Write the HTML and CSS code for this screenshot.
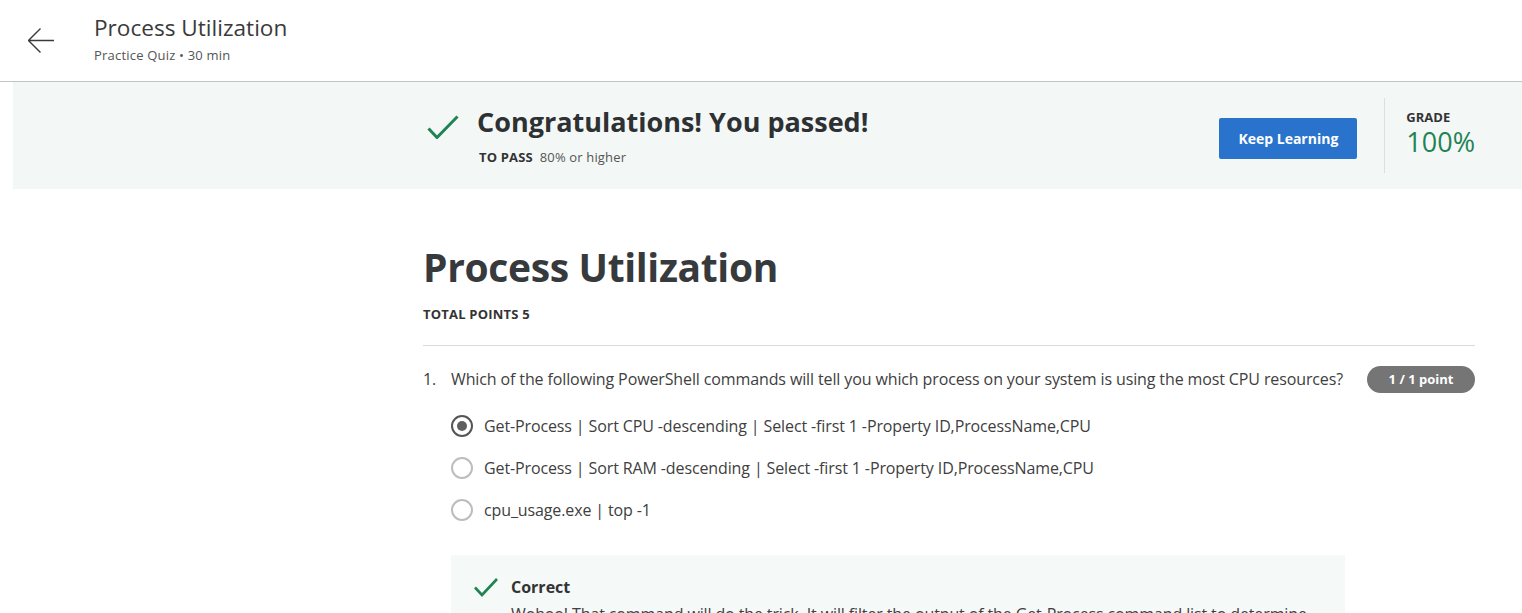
FILE: index.html
```html
<!DOCTYPE html>
<html lang="en">
<head>
<meta charset="utf-8">
<title>Process Utilization</title>
<link rel="stylesheet" href="styles.css">
</head>
<body>
<header class="topbar">
  <svg class="back" width="26" height="26" viewBox="0 0 26 26" aria-hidden="true">
    <path d="M0.5 12.5 H26 M12.5 0.5 L0.5 12.5 L12.5 24.5" fill="none" stroke="#3a3a3a" stroke-width="1.4"/>
  </svg>
  <div class="titles">
    <div class="page-title">Process Utilization</div>
    <div class="page-sub">Practice Quiz • 30 min</div>
  </div>
</header>

<section class="banner">
  <div class="banner-row">
    <svg class="pass-check" width="32" height="24" viewBox="0 0 32 24" aria-hidden="true">
      <path d="M1.5 13.5 L10 22.5 L30.5 1.5" fill="none" stroke="#1f8354" stroke-width="3"/>
    </svg>
    <div class="pass-text">
      <div class="congrats">Congratulations! You passed!</div>
      <div class="to-pass"><b>TO PASS</b>80% or higher</div>
    </div>
    <div class="banner-right">
      <button class="keep">Keep Learning</button>
      <div class="vdiv"></div>
      <div class="grade">
        <div class="grade-label">GRADE</div>
        <div class="grade-value">100%</div>
      </div>
    </div>
  </div>
</section>

<main class="quiz">
  <h1 class="quiz-title">Process Utilization</h1>
  <div class="total">TOTAL POINTS 5</div>
  <div class="rule"></div>

  <div class="question">
    <span class="qnum">1.</span>
    <span class="qtext">Which of the following PowerShell commands will tell you which process on your system is using the most CPU resources?</span>
    <span class="badge">1 / 1 point</span>
  </div>

  <div class="options">
    <div class="option"><span class="radio checked"></span><span>Get-Process | Sort CPU -descending | Select -first 1 -Property ID,ProcessName,CPU</span></div>
    <div class="option"><span class="radio"></span><span>Get-Process | Sort RAM -descending | Select -first 1 -Property ID,ProcessName,CPU</span></div>
    <div class="option"><span class="radio"></span><span>cpu_usage.exe | top -1</span></div>
  </div>

  <div class="feedback">
    <div class="fb-head">
      <svg class="fb-check" width="24" height="20" viewBox="0 0 24 20" aria-hidden="true">
        <path d="M1 10.5 L8 18 L23 2" fill="none" stroke="#1f8354" stroke-width="2.6"/>
      </svg>
      <span class="fb-title">Correct</span>
    </div>
    <p class="fb-text">Wohoo! That command will do the trick. It will filter the output of the Get-Process command list to determine which process is using the most CPU.</p>
  </div>
</main>
</body>
</html>
```
FILE: styles.css
```css
* { box-sizing: border-box; }
html, body { margin: 0; padding: 0; background: #fff; }
body {
  font-family: "Open Sans", "Noto Sans", sans-serif;
  color: #373a3c;
}

.topbar {
  display: flex;
  align-items: flex-start;
  height: 82px;
  border-bottom: 1px solid #c4c4c4;
}
.back { margin: 28px 0 0 28px; flex: none; }
.titles { margin-left: 40px; padding-top: 12px; }
.page-title { font-size: 22.6px; line-height: 32px; color: #3a3a3a; }
.page-sub { margin-top: 2px; font-size: 13px; line-height: 18px; letter-spacing: 0.2px; color: #555; }

.banner {
  margin-left: 13px;
  height: 107px;
  background: #f3f8f7;
  padding-top: 16px;
}
.banner-row {
  width: 1052px;
  margin-left: 410px;
  display: flex;
  align-items: flex-start;
}
.pass-check { margin: 17px 0 0 4px; flex: none; }
.pass-text { margin: 6px 0 0 18px; }
.congrats { font-size: 27px; line-height: 36px; font-weight: 700; color: #2e3133; }
.to-pass { margin-top: 8px; padding-left: 2px; font-size: 13px; line-height: 18px; letter-spacing: 0.15px; color: #555; }
.to-pass b { color: #333; font-weight: 700; margin-right: 7px; }

.banner-right { margin-left: auto; display: flex; align-items: flex-start; }
.keep {
  margin-top: 20px;
  width: 138px;
  height: 41px;
  border: 0;
  border-radius: 2px;
  background: #2a73cc;
  color: #fff;
  font-family: "Open Sans", sans-serif;
  font-size: 14px;
  font-weight: 700;
  padding: 0;
}
.vdiv { width: 1px; height: 75px; margin-left: 27px; background: #dedede; }
.grade { margin: 10px 0 0 21px; }
.grade-label { font-size: 13px; line-height: 18px; font-weight: 700; color: #333; }
.grade-value { font-size: 27px; line-height: 32px; color: #1f8354; }

.quiz { width: 1052px; margin-left: 423px; padding-top: 54px; }
.quiz-title { margin: 0; font-size: 39px; line-height: 48px; letter-spacing: -0.35px; font-weight: 700; color: #373a3c; }
.total { margin-top: 14px; font-size: 13px; line-height: 18px; letter-spacing: 0.2px; font-weight: 700; color: #333; }
.rule { margin-top: 22px; border-top: 1px solid #dadada; }

.question {
  margin-top: 21px;
  display: flex;
  align-items: flex-start;
  height: 24px;
  font-size: 16px;
  line-height: 24px;
  letter-spacing: -0.12px;
  color: #404040;
}
.qnum { width: 28px; flex: none; }
.qtext { flex: 1; }
.badge {
  margin-top: -1px;
  height: 27px;
  width: 108px;
  border-radius: 14px;
  background: #757575;
  color: #fff;
  font-size: 13px;
  font-weight: 700;
  line-height: 27px;
  letter-spacing: 0;
  text-align: center;
  flex: none;
}

.options { margin-top: 14px; padding-left: 28px; }
.option {
  height: 42px;
  display: flex;
  align-items: center;
  font-size: 16px;
  line-height: 24px;
  letter-spacing: -0.12px;
  color: #404040;
}
.radio {
  width: 22px;
  height: 22px;
  border-radius: 50%;
  border: 2px solid #bdbdbd;
  margin-right: 11px;
  flex: none;
  display: flex;
  align-items: center;
  justify-content: center;
}
.radio.checked { border-color: #555; }
.radio.checked::after {
  content: "";
  width: 10px;
  height: 10px;
  border-radius: 50%;
  background: #5f5f5f;
}

.feedback {
  margin: 24px 0 0 28px;
  width: 894px;
  background: #f5f9f8;
  padding: 20px 20px 20px 23px;
}
.fb-head { display: flex; align-items: center; height: 24px; }
.fb-check { margin-right: 13px; flex: none; }
.fb-title { font-size: 16px; line-height: 24px; font-weight: 700; color: #333; }
.fb-text { margin: 3px 0 0 37px; font-size: 16px; line-height: 24px; letter-spacing: -0.12px; color: #404040; }
```
